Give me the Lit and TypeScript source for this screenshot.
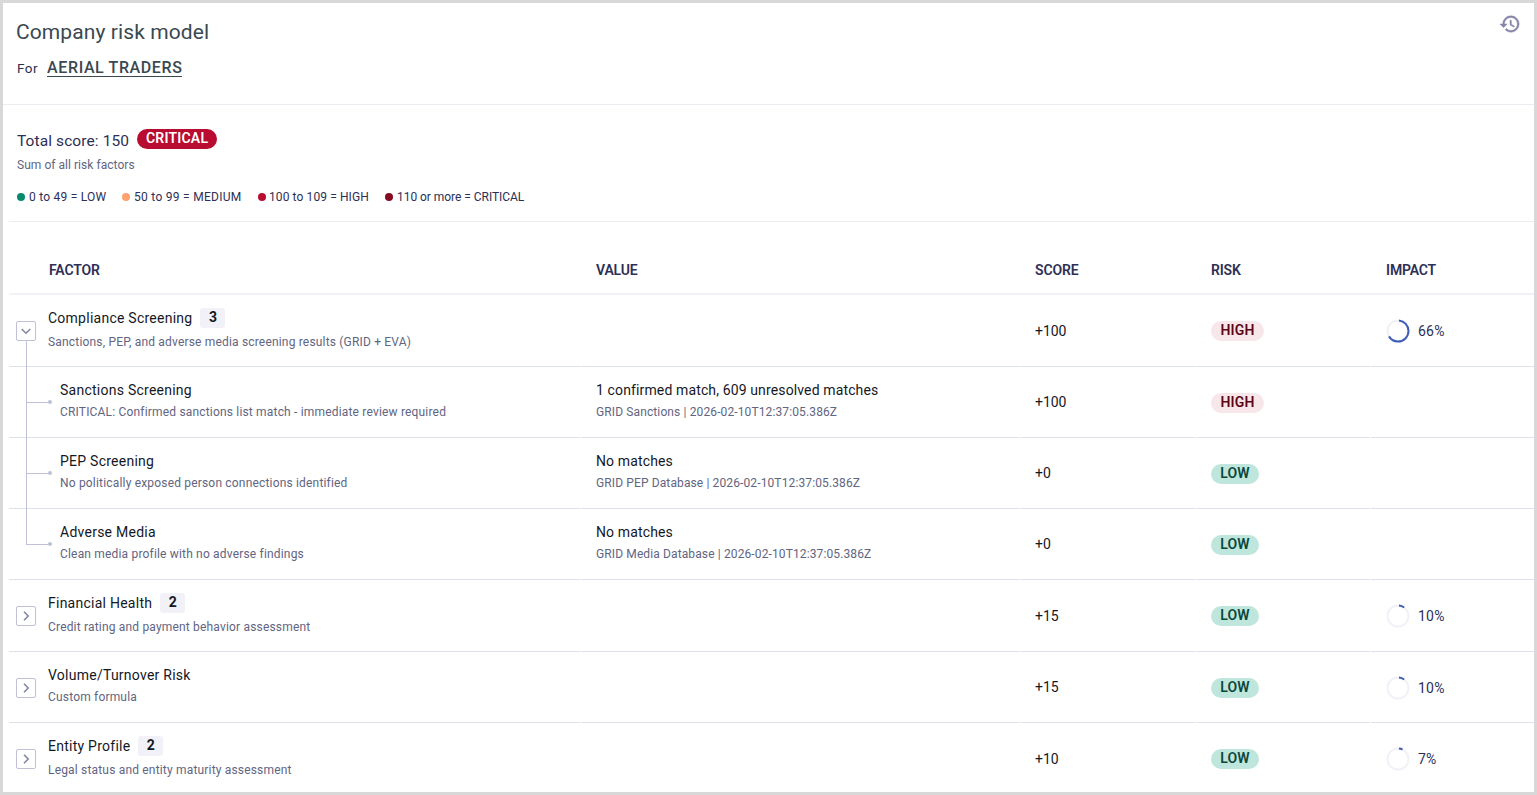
import { LitElement, html, css, svg, nothing } from "lit";
import { customElement } from "lit/decorators.js";
import { classMap } from "lit/directives/class-map.js";

type Risk = "HIGH" | "LOW";

interface Factor {
  title: string;
  note: string;
  count?: number;
  value?: string;
  source?: string;
  score: string;
  risk: Risk;
  impact?: number;
  open?: boolean;
  children?: Factor[];
}

const FACTORS: Factor[] = [
  {
    title: "Compliance Screening",
    note: "Sanctions, PEP, and adverse media screening results (GRID + EVA)",
    count: 3,
    score: "+100",
    risk: "HIGH",
    impact: 66,
    open: true,
    children: [
      {
        title: "Sanctions Screening",
        note: "CRITICAL: Confirmed sanctions list match - immediate review required",
        value: "1 confirmed match, 609 unresolved matches",
        source: "GRID Sanctions | 2026-02-10T12:37:05.386Z",
        score: "+100",
        risk: "HIGH",
      },
      {
        title: "PEP Screening",
        note: "No politically exposed person connections identified",
        value: "No matches",
        source: "GRID PEP Database | 2026-02-10T12:37:05.386Z",
        score: "+0",
        risk: "LOW",
      },
      {
        title: "Adverse Media",
        note: "Clean media profile with no adverse findings",
        value: "No matches",
        source: "GRID Media Database | 2026-02-10T12:37:05.386Z",
        score: "+0",
        risk: "LOW",
      },
    ],
  },
  { title: "Financial Health", note: "Credit rating and payment behavior assessment", count: 2, score: "+15", risk: "LOW", impact: 10 },
  { title: "Volume/Turnover Risk", note: "Custom formula", score: "+15", risk: "LOW", impact: 10 },
  { title: "Entity Profile", note: "Legal status and entity maturity assessment", count: 2, score: "+10", risk: "LOW", impact: 7 },
];

const LEGEND = [
  { level: "low", text: "0 to 49 = LOW" },
  { level: "medium", text: "50 to 99 = MEDIUM" },
  { level: "high", text: "100 to 109 = HIGH" },
  { level: "critical", text: "110 or more = CRITICAL" },
];

@customElement("app-root")
export class AppRoot extends LitElement {
  static styles = css`
    :host {
      display: block;
      box-sizing: border-box;
      height: 795px;
      border: 3px solid #d8d8d8;
      overflow: hidden;
      background: #fff;
      color: #15181f;
      font-family: Roboto, "Liberation Sans", sans-serif;
    }
    * { box-sizing: border-box; }
    .top {
      display: flex;
      justify-content: space-between;
      align-items: flex-start;
      height: 102px;
      padding: 14px 13px 0 13px;
      border-bottom: 1px solid #ebebf2;
    }
    h1 {
      margin: 0;
      font-size: 21px;
      line-height: 30px;
      font-weight: 400;
      letter-spacing: 0.1px;
      color: #3a4850;
    }
    .subject {
      display: flex;
      align-items: baseline;
      gap: 9px;
      margin: 8px 0 0 1px;
      line-height: 26px;
      font-size: 13.5px;
      letter-spacing: 0.5px;
      color: #2d2f55;
    }
    .company {
      font-size: 16px;
      font-weight: 500;
      line-height: 17px;
      letter-spacing: 0.6px;
      color: #3a4850;
      border-bottom: 1px solid #3a4850;
    }
    .history {
      display: block;
      width: 22px;
      height: 22px;
      margin-top: -4px;
      fill: #8585aa;
      stroke: #8585aa;
      stroke-width: 0.5;
    }
    .summary {
      height: 117px;
      margin-left: 6px;
      padding: 24px 0 0 8px;
      border-bottom: 1px solid #ebebf0;
      color: #2d2f55;
    }
    .total { display: flex; gap: 8px; height: 20px; }
    .total-text { font-size: 15.5px; line-height: 24px; letter-spacing: 0.1px; }
    .pill {
      display: inline-block;
      height: 20px;
      padding: 0 9px;
      border-radius: 10px;
      font-size: 14px;
      line-height: 19px;
      font-weight: 600;
      letter-spacing: 0.2px;
      text-align: center;
    }
    .pill.critical { width: 80px; padding: 0 8px; background: #b80c30; color: #fff; }
    .pill.high { width: 53px; background: #f7e6ea; color: #5e0618; }
    .pill.low { width: 48px; padding: 0; background: #bfe6dc; color: #0b463b; }
    .hint { margin-top: 5px; font-size: 12px; line-height: 22px; letter-spacing: 0.04px; color: #62657f; }
    .legend {
      display: grid;
      grid-template-columns: 105px 136px 127px auto;
      justify-content: start;
      margin-top: 10px;
      font-size: 12px;
      line-height: 22px;
      white-space: nowrap;
    }
    .legend-item { display: flex; align-items: center; gap: 4px; }
    .legend-item.low { letter-spacing: 0.24px; }
    .legend-item.medium { letter-spacing: 0.28px; }
    .legend-item.high { gap: 3px; letter-spacing: 0.1px; }
    .legend-item.critical { letter-spacing: -0.04px; }
    .dot { width: 8px; height: 8px; border-radius: 50%; }
    .low .dot { background: #0a8a6c; }
    .medium .dot { background: #ffa26f; }
    .high .dot { background: #b80c30; }
    .critical .dot { background: #850a22; }

    .table { margin-left: 6px; }
    .row {
      display: grid;
      grid-template-columns: 571px 438px 175px 174px 1fr;
      column-gap: 1px;
      height: 71px;
    }
    .row.tall { height: 72px; }
    .row.head { height: 73px; column-gap: 0; grid-template-columns: 571px 439px 176px 175px 1fr; }
    .cell {
      display: flex;
      align-items: center;
      padding-left: 15px;
      border-bottom: 1px solid #dde1ea;
      white-space: nowrap;
      font-size: 14px;
    }
    .cell.factor { position: relative; gap: 12px; padding-left: 7px; }
    .row.short .risk, .row.short .impact { padding-top: 2px; }
    .row.short .toggle { margin-top: 2px; }
    .head .cell {
      padding: 24px 0 0 16px;
      border-bottom: 2px solid #f1f1f7;
      font-size: 14px;
      font-weight: 600;
      letter-spacing: -0.15px;
      color: #2d2f55;
    }
    .head .cell:first-child { padding-left: 40px; }
    .toggle {
      display: flex;
      align-items: center;
      justify-content: center;
      width: 20px;
      height: 20px;
      padding: 0;
      border: 1px solid #c0c0d6;
      border-radius: 2px;
      background: #fff;
    }
    .toggle svg { width: 12px; height: 12px; fill: none; stroke: #8585a5; stroke-width: 1.6; }
    .text { margin-top: -2px; }
    .title {
      display: flex;
      align-items: center;
      gap: 8px;
      height: 22px;
      line-height: 22px;
      font-size: 14px;
      letter-spacing: 0.25px;
    }
    .note {
      font-size: 12px;
      line-height: 22px;
      letter-spacing: 0.18px;
      color: #62657f;
    }
    .source { letter-spacing: 0.12px; }
    .counted .note { margin-top: 2px; }
    .value .title { letter-spacing: 0.13px; }
    .count {
      width: 25px;
      height: 20px;
      border-radius: 3px;
      background: #f1f1f7;
      font-weight: 700;
      line-height: 19px;
      letter-spacing: 0;
      text-align: center;
    }
    .child .factor { padding-left: 51px; }
    .child .factor::before {
      content: "";
      position: absolute;
      left: 17px;
      top: -36px;
      width: 24px;
      height: 71px;
      border: solid #c0c0d6;
      border-width: 0 0 1px 1px;
    }
    .child.first .factor::before { top: -26px; height: 62px; }
    .child.first .factor::before { height: 61px; }
    .child .factor::after {
      content: "";
      position: absolute;
      left: 39px;
      top: 33px;
      width: 4px;
      height: 4px;
      border-radius: 50%;
      background: #c0c0d6;
    }
    .score { letter-spacing: -0.05px; }
    .impact { gap: 8px; letter-spacing: 0.2px; color: #2d2f55; }
    .ring { width: 24px; height: 24px; fill: none; stroke-width: 2; }
    .track { stroke: #f1f1f7; }
    .arc { stroke: #3f5cb8; }
  `;

  private ring(percent: number) {
    const r = 10.5;
    const full = 2 * Math.PI * r;
    const start = 1;
    const arc = (full * percent) / 100 - start;
    return svg`<svg class="ring" viewBox="0 0 24 24">
      <circle class="track" cx="12" cy="12" r=${r}></circle>
      <circle class="arc" cx="12" cy="12" r=${r} transform="rotate(-90 12 12)"
        stroke-dasharray="0 ${start} ${arc} ${full}"></circle>
    </svg>`;
  }

  private row(f: Factor, child = false, first = false): unknown {
    return html`
      <div class=${classMap({ row: true, tall: !!f.count, short: !f.count, child, first })}>
        <div class="cell factor">
          ${child
            ? nothing
            : html`<button class="toggle" aria-label="Toggle ${f.title}">
                <svg viewBox="0 0 12 12"><path d=${f.open ? "M1.7 4 6 8.2 10.3 4" : "M4 1.7 8.2 6 4 10.3"}></path></svg>
              </button>`}
          <div class=${classMap({ text: true, counted: !!f.count })}>
            <div class="title"><span>${f.title}</span>${f.count ? html`<span class="count">${f.count}</span>` : nothing}</div>
            <div class="note">${f.note}</div>
          </div>
        </div>
        <div class="cell value">
          ${f.value
            ? html`<div class="text"><div class="title">${f.value}</div><div class="note source">${f.source}</div></div>`
            : nothing}
        </div>
        <div class="cell score">${f.score}</div>
        <div class="cell risk"><span class="pill ${f.risk.toLowerCase()}">${f.risk}</span></div>
        <div class="cell impact">
          ${f.impact === undefined ? nothing : html`${this.ring(f.impact)}<span>${f.impact}%</span>`}
        </div>
      </div>
      ${f.children?.map((c, i) => this.row(c, true, i === 0)) ?? nothing}
    `;
  }

  render() {
    return html`
      <header class="top">
        <div>
          <h1>Company risk model</h1>
          <div class="subject"><span>For</span><span class="company">AERIAL TRADERS</span></div>
        </div>
        <svg class="history" viewBox="0 0 24 24"><path d="M13 3a9 9 0 0 0-9 9H1l3.89 3.89.07.14L9 12H6c0-3.87 3.13-7 7-7s7 3.13 7 7-3.13 7-7 7c-1.93 0-3.68-.79-4.94-2.06l-1.42 1.42A8.954 8.954 0 0 0 13 21a9 9 0 0 0 0-18zm-1 5v5l4.28 2.54.72-1.21-3.5-2.08V8H12z"></path></svg>
      </header>
      <section class="summary">
        <div class="total">
          <span class="total-text">Total score: 150</span>
          <span class="pill critical">CRITICAL</span>
        </div>
        <div class="hint">Sum of all risk factors</div>
        <div class="legend">
          ${LEGEND.map((l) => html`<div class="legend-item ${l.level}"><span class="dot"></span><span>${l.text}</span></div>`)}
        </div>
      </section>
      <section class="table">
        <div class="row head">
          ${["FACTOR", "VALUE", "SCORE", "RISK", "IMPACT"].map((h) => html`<div class="cell">${h}</div>`)}
        </div>
        ${FACTORS.map((f) => this.row(f))}
      </section>
    `;
  }
}
